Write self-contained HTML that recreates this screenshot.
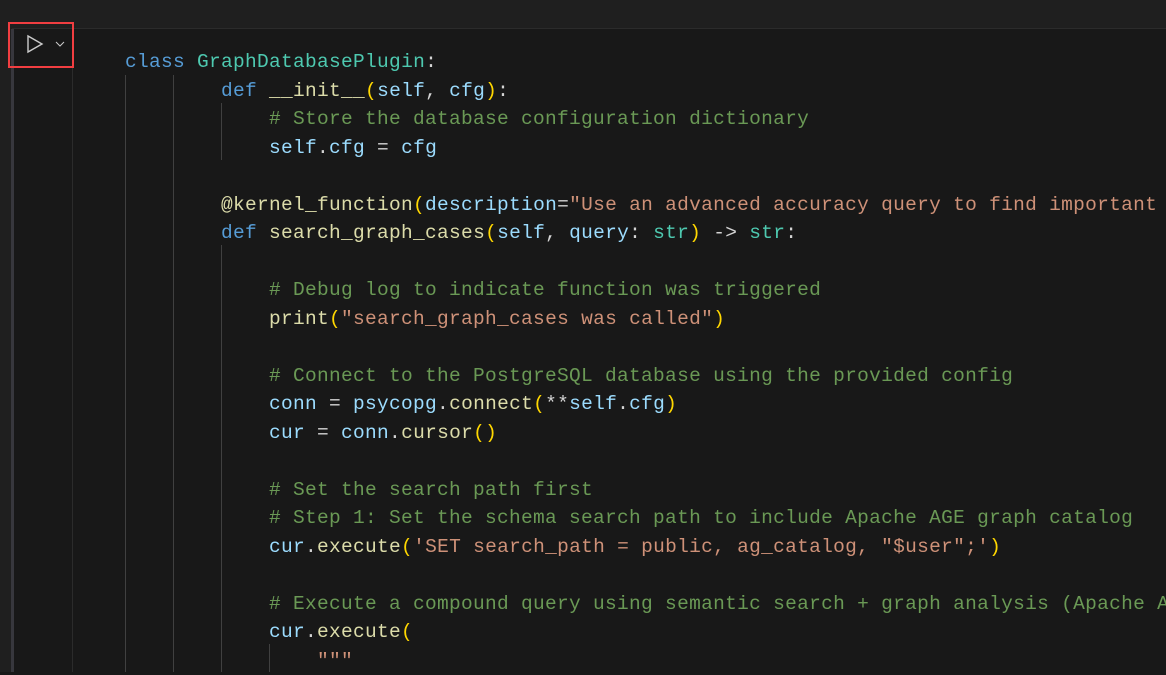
<!DOCTYPE html>
<html><head><style>
html,body{margin:0;padding:0;width:1166px;height:672px;overflow:hidden;background:#181818;}
.top{position:absolute;left:0;top:0;width:1166px;height:28px;background:#1f1f1f;border-bottom:1px solid #2b2b2b;}
.gut{position:absolute;left:0;top:0;width:12px;height:672px;background:#1f1f1f;}
.bar{position:absolute;left:11px;top:29px;width:3px;height:643px;background:#37373d;}
.cellL{position:absolute;left:72px;top:29px;width:1px;height:643px;background:#2b2b2b;}
.btn{position:absolute;left:8px;top:22px;width:66px;height:46px;border:2px solid #f13e41;box-sizing:border-box;}
.code{position:absolute;left:0;top:48px;font-family:"Liberation Mono",monospace;font-size:19.5px;letter-spacing:0.3px;color:#d4d4d4;}
.l{position:absolute;left:0;height:28.5px;line-height:28.5px;white-space:pre;}
.g{position:absolute;width:1px;background:#404040;}
.k{color:#569cd6}.c{color:#4ec9b0}.f{color:#dcdcaa}.m{color:#6a9955}.v{color:#9cdcfe}.s{color:#ce9178}.p{color:#ffd700}.w{color:#d4d4d4}
</style></head><body>
<div class="top"></div>
<div class="gut"></div><div class="bar"></div><div class="cellL"></div>
<div class="btn">
<svg width="62" height="42" style="position:absolute;left:0;top:0"><path d="M18 12 L18 28 L32 20 Z" fill="none" stroke="#cccccc" stroke-width="1.4"/><path d="M46 18 L50 22 L54 18" fill="none" stroke="#cccccc" stroke-width="1"/></svg>
</div>
<div class="g" style="left:125px;top:75px;height:597px"></div>
<div class="g" style="left:173px;top:75px;height:597px"></div>
<div class="g" style="left:221px;top:103px;height:57px"></div>
<div class="g" style="left:221px;top:245px;height:427px"></div>
<div class="g" style="left:269px;top:644px;height:28px"></div>
<div class="code">
<div class="l" style="top:0;left:125px"><span class="k">class</span> <span class="c">GraphDatabasePlugin</span>:</div>
<div class="l" style="top:28.5px;left:221px"><span class="k">def</span> <span class="f">__init__</span><span class="p">(</span><span class="v">self</span>, <span class="v">cfg</span><span class="p">)</span>:</div>
<div class="l" style="top:57px;left:269px"><span class="m"># Store the database configuration dictionary</span></div>
<div class="l" style="top:85.5px;left:269px"><span class="v">self</span>.<span class="v">cfg</span> = <span class="v">cfg</span></div>
<div class="l" style="top:142.5px;left:221px"><span class="f">@kernel_function</span><span class="p">(</span><span class="v">description</span>=<span class="s">"Use an advanced accuracy query to find important</span></div>
<div class="l" style="top:171px;left:221px"><span class="k">def</span> <span class="f">search_graph_cases</span><span class="p">(</span><span class="v">self</span>, <span class="v">query</span>: <span class="c">str</span><span class="p">)</span> -&gt; <span class="c">str</span>:</div>
<div class="l" style="top:228px;left:269px"><span class="m"># Debug log to indicate function was triggered</span></div>
<div class="l" style="top:256.5px;left:269px"><span class="f">print</span><span class="p">(</span><span class="s">"search_graph_cases was called"</span><span class="p">)</span></div>
<div class="l" style="top:313.5px;left:269px"><span class="m"># Connect to the PostgreSQL database using the provided config</span></div>
<div class="l" style="top:342px;left:269px"><span class="v">conn</span> = <span class="v">psycopg</span>.<span class="f">connect</span><span class="p">(</span>**<span class="v">self</span>.<span class="v">cfg</span><span class="p">)</span></div>
<div class="l" style="top:370.5px;left:269px"><span class="v">cur</span> = <span class="v">conn</span>.<span class="f">cursor</span><span class="p">()</span></div>
<div class="l" style="top:427.5px;left:269px"><span class="m"># Set the search path first</span></div>
<div class="l" style="top:456px;left:269px"><span class="m"># Step 1: Set the schema search path to include Apache AGE graph catalog</span></div>
<div class="l" style="top:484.5px;left:269px"><span class="v">cur</span>.<span class="f">execute</span><span class="p">(</span><span class="s">'SET search_path = public, ag_catalog, "$user";'</span><span class="p">)</span></div>
<div class="l" style="top:541.5px;left:269px"><span class="m"># Execute a compound query using semantic search + graph analysis (Apache AGE)</span></div>
<div class="l" style="top:570px;left:269px"><span class="v">cur</span>.<span class="f">execute</span><span class="p">(</span></div>
<div class="l" style="top:598.5px;left:317px"><span class="s">"""</span></div>
</div>
</body></html>
